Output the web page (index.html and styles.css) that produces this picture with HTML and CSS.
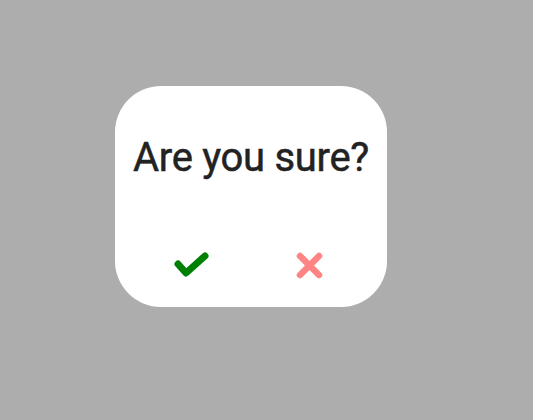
FILE: index.html
```html
<!DOCTYPE html>
<html>
<head>
<meta charset="utf-8">
<link rel="stylesheet" href="styles.css">
</head>
<body>
<div class="card">
  <h1 class="title">Are you sure?</h1>
  <div class="actions">
    <button class="btn" aria-label="Yes">
      <svg width="36" height="30" viewBox="0 0 36 30"><polyline points="4,13 12,22 31,5" fill="none" stroke="#008000" stroke-width="7" stroke-linecap="round" stroke-linejoin="round"/></svg>
    </button>
    <button class="btn" aria-label="No">
      <svg width="30" height="30" viewBox="0 0 30 30"><path d="M5,5 L24,24 M24,5 L5,24" fill="none" stroke="#ff8585" stroke-width="6.5" stroke-linecap="round"/></svg>
    </button>
  </div>
</div>
</body>
</html>
```
FILE: styles.css
```css
html, body { margin: 0; padding: 0; }
body {
  background: #adadad;
  width: 533px;
  height: 420px;
  font-family: Roboto, "Noto Sans", sans-serif;
}
.card {
  margin: 86px 0 0 115px;
  width: 272px;
  height: 221px;
  background: #fff;
  border-radius: 46px;
  display: flex;
  flex-direction: column;
  align-items: center;
}
.title {
  margin: 46px 0 0;
  font-size: 40px;
  font-weight: 400;
  color: #222;
  letter-spacing: -0.3px;
  line-height: 52px;
  -webkit-text-stroke: 0.5px #222;
}
.actions {
  margin-top: 66px;
  width: 100%;
  display: flex;
  justify-content: space-evenly;
}
.btn {
  width: 82px;
  height: 32px;
  padding: 0;
  border: none;
  background: none;
  display: flex;
  align-items: center;
  justify-content: center;
}
```
